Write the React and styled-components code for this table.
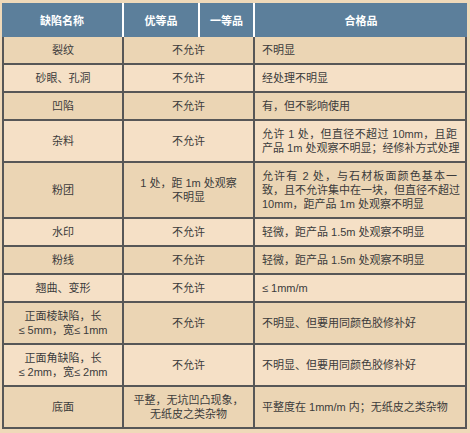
import React from 'react';
import styled, { createGlobalStyle } from 'styled-components';

const GlobalStyle = createGlobalStyle`
    body{
        margin: 0;
        background: #efd9b9;
        font-family: "Liberation Sans", "Noto Sans CJK SC", sans-serif;
    }
`

const rows = [
    { name: ['裂纹'], top: ['不允许'], ok: ['不明显'] },
    { name: ['砂眼、孔洞'], top: ['不允许'], ok: ['经处理不明显'] },
    { name: ['凹陷'], top: ['不允许'], ok: ['有，但不影响使用'] },
    { name: ['杂料'], top: ['不允许'], ok: ['允许 1 处，但直径不超过 10mm，且距', '产品 1m 处观察不明显；经修补方式处理'] },
    { name: ['粉团'], top: ['1 处，距 1m 处观察', '不明显'], ok: ['允许有 2 处，与石材板面颜色基本一', '致，且不允许集中在一块，但直径不超过', '10mm，距产品 1m 处观察不明显'] },
    { name: ['水印'], top: ['不允许'], ok: ['轻微，距产品 1.5m 处观察不明显'] },
    { name: ['粉线'], top: ['不允许'], ok: ['轻微，距产品 1.5m 处观察不明显'] },
    { name: ['翘曲、变形'], top: ['不允许'], ok: ['≤ 1mm/m'] },
    { name: ['正面棱缺陷，长', '≤ 5mm，宽≤ 1mm'], top: ['不允许'], ok: ['不明显、但要用同颜色胶修补好'] },
    { name: ['正面角缺陷，长', '≤ 2mm，宽≤ 2mm'], top: ['不允许'], ok: ['不明显、但要用同颜色胶修补好'] },
    { name: ['底面'], top: ['平整，无坑凹凸现象，', '无纸皮之类杂物'], ok: ['平整度在 1mm/m 内；无纸皮之类杂物'] },
]

const Lines = ({ lines, justify }) => (
    <TextBlock>
        {lines.map((l, i) => (
            <Line key={i} $justify={justify && i < lines.length - 1}>{l}</Line>
        ))}
    </TextBlock>
)

const App = () => {
    return (
        <Wrap>
            <GlobalStyle />
            <Sheet>
                <HeadCell>缺陷名称</HeadCell>
                <HeadCell>优等品</HeadCell>
                <HeadCell>一等品</HeadCell>
                <HeadCell $last>合格品</HeadCell>
                {rows.map((r, i) => (
                    <React.Fragment key={i}>
                        <Cell $first $tone={i % 2} $align='center'>
                            <Lines lines={r.name} />
                        </Cell>
                        <Cell $span={2} $tone={i % 2} $align='center'>
                            <Lines lines={r.top} />
                        </Cell>
                        <Cell $tone={i % 2} $align='left' $wide>
                            <Lines lines={r.ok} justify />
                        </Cell>
                    </React.Fragment>
                ))}
            </Sheet>
        </Wrap>
    )
}

export default App

const Wrap = styled.div`
    padding: 3px 0 0 2px;
`

const Sheet = styled.div`
    display: grid;
    grid-template-columns: 122px 76px 55px 212px;
    width: 465px;
`

const HeadCell = styled.div`
    height: 34px;
    display: flex;
    align-items: center;
    justify-content: center;
    background: #5c7f9b;
    color: #fff;
    font-weight: 700;
    font-size: 11px;
    box-sizing: border-box;
    border-right: ${p => p.$last ? 'none' : '2px solid #fff'};
`

const Cell = styled.div`
    grid-column: span ${p => p.$span || 1};
    display: flex;
    align-items: center;
    justify-content: ${p => p.$align === 'center' ? 'center' : 'flex-start'};
    text-align: ${p => p.$align};
    box-sizing: border-box;
    padding: ${p => p.$wide ? '6px 8px 6px 7px' : '6px 4px'};
    background: ${p => p.$tone ? '#f5e0c6' : '#ebd5b4'};
    border-right: 2px solid #575757;
    border-bottom: 2px solid #575757;
    border-left: ${p => p.$first ? '2px solid #575757' : 'none'};
    color: #3b3b3b;
    font-size: 11px;
    line-height: 14px;
`

const TextBlock = styled.div`
    width: 100%;
`

const Line = styled.div`
    white-space: nowrap;
    text-align: ${p => p.$justify ? 'justify' : 'inherit'};
    text-align-last: ${p => p.$justify ? 'justify' : 'auto'};
`
